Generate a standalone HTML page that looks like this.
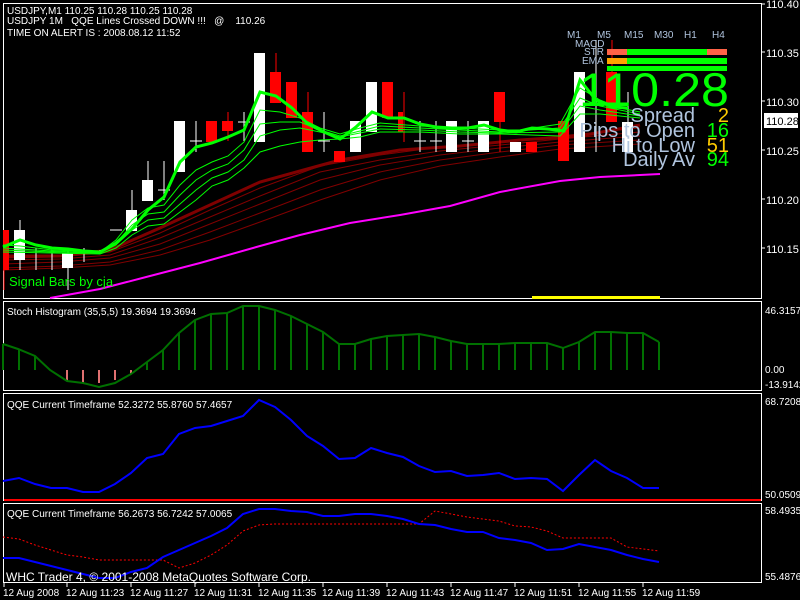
<!DOCTYPE html>
<html><head><meta charset="utf-8"><style>
html,body{margin:0;padding:0;background:#000;width:800px;height:600px;overflow:hidden}
svg{display:block}
text{font-family:"Liberation Sans",sans-serif}
</style></head><body>
<svg width="800" height="600" viewBox="0 0 800 600" xmlns="http://www.w3.org/2000/svg">
<rect width="800" height="600" fill="#000"/>
<!-- panel borders -->
<g fill="none" stroke="#fff" stroke-width="1">
<rect x="3.5" y="3.5" width="758" height="295"/>
<rect x="3.5" y="301.5" width="758" height="89"/>
<rect x="3.5" y="393.5" width="758" height="107"/>
<rect x="3.5" y="503.5" width="758" height="79"/>
</g>
<!-- price axis -->
<g fill="#fff" font-size="11">
<text x="766" y="8">110.40</text><line x1="761" y1="4" x2="765" y2="4" stroke="#fff"/>
<text x="766" y="57">110.35</text><line x1="761" y1="52" x2="765" y2="52" stroke="#fff"/>
<text x="766" y="106">110.30</text><line x1="761" y1="101" x2="765" y2="101" stroke="#fff"/>
<text x="766" y="155">110.25</text><line x1="761" y1="150" x2="765" y2="150" stroke="#fff"/>
<text x="766" y="204">110.20</text><line x1="761" y1="199" x2="765" y2="199" stroke="#fff"/>
<text x="766" y="253">110.15</text><line x1="761" y1="248" x2="765" y2="248" stroke="#fff"/>
</g>
<rect x="764" y="113" width="34" height="15" fill="#fff"/>
<text x="766" y="125" font-size="11" fill="#000">110.28</text>
<g fill="#fff" font-size="10">
<text x="765" y="314">46.3157</text>
<text x="765" y="373">0.00</text>
<text x="765" y="388">-13.9142</text>
<text x="765" y="405">68.7208</text>
<text x="765" y="498">50.0509</text>
<text x="765" y="514">58.4935</text>
<text x="765" y="580">55.4876</text>
</g>
<!-- headers -->
<g fill="#fff" font-size="10">
<text x="7" y="14">USDJPY,M1  110.25 110.28 110.25 110.28</text>
<text x="7" y="24" xml:space="preserve">USDJPY 1M   QQE Lines Crossed DOWN !!!   @    110.26</text>
<text x="7" y="36">TIME ON ALERT IS : 2008.08.12 11:52</text>
</g>
<!-- magenta -->
<polyline fill="none" stroke="#ff00ff" stroke-width="2" points="50,298 100,289 150,276 200,263 260,246 300,235 350,223 400,215 450,206 500,192 560,181 600,177 660,174"/>
<!-- dark red lines -->
<g fill="none" stroke="#800000" stroke-width="1">
<polyline points="3,268 60,266 110,262 160,250 210,232 260,213 320,190 380,172 440,160 500,152 560,145 640,140"/>
<polyline points="3,264 60,262 110,258 160,244 210,224 260,204 320,180 380,165 440,155 500,148 560,142 640,136"/>
<polyline points="3,260 60,259 110,255 160,238 210,217 260,196 320,172 380,160 440,151 500,145 560,139 640,132"/>
<polyline points="3,258 60,257 110,252 160,233 210,210 260,188 320,166 380,155 440,147 500,142 560,136 640,128"/>
<polyline points="3,270 60,268 110,265 160,255 210,240 260,222 320,200 380,180 440,166 500,157 560,149 640,144"/>
</g>
<polyline fill="none" stroke="#800000" stroke-width="3" points="3,256 60,256 110,250 160,228 210,205 260,182 300,171 340,160 400,150 460,146 520,140 580,136 640,125"/>
<!-- candles -->
<g stroke="#fff" stroke-width="1">
<line x1="20" y1="220" x2="20" y2="270"/><line x1="36" y1="248" x2="36" y2="270"/><line x1="52" y1="250" x2="52" y2="270"/><line x1="68" y1="248" x2="68" y2="290"/>
<line x1="84" y1="248" x2="84" y2="262"/><line x1="100" y1="250" x2="100" y2="254"/><line x1="116" y1="231" x2="116" y2="231"/>
<line x1="110" y1="230" x2="122" y2="230"/><line x1="132" y1="190" x2="132" y2="230"/><line x1="148" y1="161" x2="148" y2="201"/>
<line x1="164" y1="161" x2="164" y2="200"/><line x1="158" y1="190" x2="170" y2="190"/><line x1="196" y1="121" x2="196" y2="152"/><line x1="190" y1="141" x2="202" y2="141"/>
<line x1="244" y1="112" x2="244" y2="141"/><line x1="238" y1="122" x2="250" y2="122"/><line x1="324" y1="112" x2="324" y2="152"/><line x1="318" y1="141" x2="330" y2="141"/>
<line x1="420" y1="121" x2="420" y2="152"/><line x1="414" y1="141" x2="426" y2="141"/><line x1="436" y1="121" x2="436" y2="152"/><line x1="430" y1="141" x2="442" y2="141"/>
<line x1="468" y1="121" x2="468" y2="152"/><line x1="462" y1="141" x2="474" y2="141"/><line x1="532" y1="142" x2="532" y2="152"/>
<line x1="596" y1="40" x2="596" y2="152"/><line x1="628" y1="92" x2="628" y2="152"/>
</g>
<g stroke="#ff0000" stroke-width="1">
<line x1="4" y1="230" x2="4" y2="290"/><line x1="228" y1="112" x2="228" y2="141"/><line x1="276" y1="53" x2="276" y2="103"/><line x1="308" y1="92" x2="308" y2="152"/><line x1="404" y1="92" x2="404" y2="142"/><line x1="500" y1="92" x2="500" y2="152"/><line x1="612" y1="40" x2="612" y2="122"/>
</g>
<g fill="#fff">
<rect x="14" y="230" width="11" height="30"/><rect x="62" y="253" width="11" height="15"/><rect x="126" y="210" width="11" height="21"/><rect x="142" y="180" width="11" height="21"/>
<rect x="174" y="121" width="11" height="51"/><rect x="254" y="53" width="11" height="89"/><rect x="350" y="121" width="11" height="31"/><rect x="366" y="82" width="11" height="50"/>
<rect x="446" y="121" width="11" height="31"/><rect x="478" y="121" width="11" height="31"/><rect x="510" y="142" width="11" height="10"/><rect x="574" y="72" width="11" height="80"/><rect x="622" y="122" width="11" height="30"/>
<rect x="558" y="135" width="11" height="18"/>
</g>
<g fill="#ff0000">
<rect x="3" y="230" width="6" height="40"/><rect x="206" y="121" width="11" height="21"/><rect x="222" y="121" width="11" height="10"/><rect x="270" y="72" width="11" height="31"/>
<rect x="286" y="82" width="11" height="36"/><rect x="302" y="112" width="11" height="40"/><rect x="334" y="151" width="11" height="11"/><rect x="382" y="82" width="11" height="36"/>
<rect x="398" y="112" width="5" height="20"/><rect x="494" y="92" width="11" height="30"/><rect x="526" y="142" width="11" height="10"/><rect x="558" y="121" width="11" height="40"/><rect x="606" y="72" width="11" height="50"/>
</g>
<!-- green thin lines -->
<g fill="none" stroke="#00ff00" stroke-width="1">
<polyline points="3,245 20,246 52,250 100,252 116,240 132,220 148,208 164,205 180,185 196,170 212,162 228,156 244,142 260,110 280,112 300,118 320,128 340,134 360,128 380,123 420,126 460,128 500,130 520,130 560,124 580,88 600,100 620,108 640,112"/>
<polyline points="3,248 52,251 100,253 116,243 132,225 148,214 164,212 180,195 196,180 212,170 228,164 244,150 260,124 280,122 300,122 320,130 340,136 360,131 380,126 420,128 460,130 500,132 560,128 580,98 600,106 640,114"/>
<polyline points="3,250 52,252 100,253 116,245 132,230 148,220 164,218 180,204 196,190 212,178 228,172 244,160 260,136 280,130 300,128 320,132 340,137 360,133 380,129 420,130 460,132 500,133 560,132 580,106 600,110 640,116"/>
<polyline points="3,252 52,253 100,254 116,248 132,235 148,226 164,224 180,212 196,200 212,186 228,180 244,168 260,152 280,146 300,142 320,140 340,139 360,137 380,132 420,132 460,134 500,134 560,136 580,114 600,114 640,118"/>
</g>
<polyline fill="none" stroke="#00ff00" stroke-width="3" points="3,247 20,240 36,245 52,248 68,249 84,251 100,252 116,243 132,229 148,210 164,197 180,162 196,147 212,143 228,137 244,130 260,92 276,96 292,108 308,124 324,132 340,139 356,127 372,112 388,118 404,118 420,124 436,127 452,128 468,128 484,125 500,130 516,132 532,128 548,129 564,131 580,80 596,100 612,107 628,108"/>
<text x="9" y="286" font-size="13" fill="#00ff00">Signal Bars by cja</text>
<rect x="532" y="296" width="128" height="3" fill="#ffff00"/>
<!-- dashboard -->
<g fill="#b0c4de" font-size="10">
<text x="567" y="38">M1</text><text x="597" y="38">M5</text><text x="624" y="38">M15</text><text x="654" y="38">M30</text><text x="684" y="38">H1</text><text x="712" y="38">H4</text>
<text x="575" y="47">MACD</text><text x="584" y="55">STR</text><text x="582" y="64">EMA</text>
</g>
<rect x="607" y="49" width="20" height="6" fill="#ff6347"/><rect x="627" y="49" width="80" height="6" fill="#00ff00"/><rect x="707" y="49" width="20" height="6" fill="#ff6347"/>
<rect x="607" y="58" width="20" height="6" fill="#ffa500"/><rect x="627" y="58" width="100" height="6" fill="#00ff00"/>
<rect x="607" y="66" width="120" height="5" fill="#00ff00"/>
<text x="579" y="106" font-size="47" fill="#00ff00" textLength="150" lengthAdjust="spacingAndGlyphs">110.28</text>
<g fill="#b0c4de" font-size="20" text-anchor="end">
<text x="695" y="122">Spread</text><text x="695" y="137">Pips to Open</text><text x="695" y="152">Hi to Low</text><text x="695" y="166">Daily Av</text>
</g>
<g font-size="20" text-anchor="end">
<text x="729" y="122" fill="#ffcc00">2</text><text x="729" y="137" fill="#00ff00">16</text><text x="729" y="152" fill="#ffcc00">51</text><text x="729" y="166" fill="#00ff00">94</text>
</g>
<!-- stoch -->
<text x="7" y="315" font-size="10" fill="#fff">Stoch Histogram (35,5,5) 19.3694 19.3694</text>
<g stroke="#007000" stroke-width="2">
<line x1="3" y1="370" x2="3" y2="344"/><line x1="19" y1="370" x2="19" y2="349"/><line x1="35" y1="370" x2="35" y2="356"/><line x1="147" y1="370" x2="147" y2="362"/><line x1="163" y1="370" x2="163" y2="350"/><line x1="179" y1="370" x2="179" y2="333"/><line x1="195" y1="370" x2="195" y2="320"/><line x1="211" y1="370" x2="211" y2="314"/><line x1="227" y1="370" x2="227" y2="313"/><line x1="243" y1="370" x2="243" y2="306"/><line x1="259" y1="370" x2="259" y2="306"/><line x1="275" y1="370" x2="275" y2="310"/><line x1="291" y1="370" x2="291" y2="316"/><line x1="307" y1="370" x2="307" y2="324"/><line x1="323" y1="370" x2="323" y2="332"/><line x1="339" y1="370" x2="339" y2="344"/><line x1="355" y1="370" x2="355" y2="344"/><line x1="371" y1="370" x2="371" y2="339"/><line x1="387" y1="370" x2="387" y2="336"/><line x1="403" y1="370" x2="403" y2="335"/><line x1="419" y1="370" x2="419" y2="334"/><line x1="435" y1="370" x2="435" y2="337"/><line x1="451" y1="370" x2="451" y2="341"/><line x1="467" y1="370" x2="467" y2="344"/><line x1="483" y1="370" x2="483" y2="344"/><line x1="499" y1="370" x2="499" y2="344"/><line x1="515" y1="370" x2="515" y2="343"/><line x1="531" y1="370" x2="531" y2="343"/><line x1="547" y1="370" x2="547" y2="343"/><line x1="563" y1="370" x2="563" y2="348"/><line x1="579" y1="370" x2="579" y2="342"/><line x1="595" y1="370" x2="595" y2="332"/><line x1="611" y1="370" x2="611" y2="332"/><line x1="627" y1="370" x2="627" y2="333"/><line x1="643" y1="370" x2="643" y2="333"/><line x1="659" y1="370" x2="659" y2="342"/>
</g>
<g stroke="#e07070" stroke-width="2">
<line x1="67" y1="370" x2="67" y2="381"/><line x1="83" y1="370" x2="83" y2="383"/><line x1="99" y1="370" x2="99" y2="383"/><line x1="115" y1="370" x2="115" y2="380"/><line x1="131" y1="370" x2="131" y2="374"/>
</g>
<polyline fill="none" stroke="#007000" stroke-width="2" points="3,344 18,349 35,356 50,370 67,381 83,383 99,387 115,383 131,374 147,362 163,350 179,333 195,320 211,314 227,313 243,306 259,306 275,310 291,316 307,324 323,332 339,344 355,344 371,339 387,336 403,335 419,334 435,337 451,341 467,344 483,344 499,344 515,343 531,343 547,343 563,348 579,342 595,332 611,332 627,333 643,333 659,342"/>
<!-- QQE1 -->
<text x="7" y="408" font-size="10" fill="#fff">QQE Current Timeframe 52.3272 55.8760 57.4657</text>
<line x1="4" y1="500" x2="761" y2="500" stroke="#ff0000" stroke-width="2"/>
<polyline fill="none" stroke="#0000ff" stroke-width="2" points="3,481 19,478 35,484 51,488 67,488 83,492 99,492 115,484 131,473 147,458 163,454 179,434 195,428 211,426 227,421 243,416 259,400 275,407 291,420 307,436 323,446 339,459 355,458 371,448 387,453 403,457 419,466 435,472 451,471 467,476 483,475 499,473 515,479 531,478 547,479 563,491 579,475 595,460 611,471 627,478 643,488 659,488"/>
<!-- QQE2 -->
<text x="7" y="517" font-size="10" fill="#fff">QQE Current Timeframe 56.2673 56.7242 57.0065</text>
<polyline fill="none" stroke="#ff0000" stroke-width="1" stroke-dasharray="2,2" points="3,537 19,539 35,545 51,550 67,555 83,557 99,560 115,560 131,560 147,560 163,560 179,568 195,563 211,555 227,545 243,531 259,525 275,524 291,524 419,524 435,511 451,514 467,517 483,519 499,521 515,526 531,527 547,531 563,538 579,538 595,538 611,538 627,547 643,549 659,551"/>
<polyline fill="none" stroke="#0000ff" stroke-width="2" points="3,558 19,558 35,562 51,566 67,570 83,574 99,578 115,578 131,572 147,568 163,557 179,550 195,543 211,536 227,528 243,514 259,509 275,509 291,511 307,512 323,516 339,516 355,514 371,514 387,516 403,519 419,524 435,525 451,529 467,532 483,532 499,538 515,540 531,543 547,550 563,549 579,544 595,547 611,550 627,555 643,559 659,562"/>
<text x="6" y="581" font-size="12" fill="#fff">WHC Trader 4, © 2001-2008 MetaQuotes Software Corp.</text>
<!-- time axis -->
<g stroke="#fff"><line x1="4" y1="583" x2="4" y2="587"/><line x1="67" y1="583" x2="67" y2="587"/><line x1="131" y1="583" x2="131" y2="587"/><line x1="195" y1="583" x2="195" y2="587"/><line x1="259" y1="583" x2="259" y2="587"/><line x1="323" y1="583" x2="323" y2="587"/><line x1="387" y1="583" x2="387" y2="587"/><line x1="451" y1="583" x2="451" y2="587"/><line x1="515" y1="583" x2="515" y2="587"/><line x1="579" y1="583" x2="579" y2="587"/><line x1="643" y1="583" x2="643" y2="587"/></g>
<g fill="#fff" font-size="10">
<text x="3" y="596">12 Aug 2008</text><text x="66" y="596">12 Aug 11:23</text><text x="130" y="596">12 Aug 11:27</text><text x="194" y="596">12 Aug 11:31</text><text x="258" y="596">12 Aug 11:35</text><text x="322" y="596">12 Aug 11:39</text><text x="386" y="596">12 Aug 11:43</text><text x="450" y="596">12 Aug 11:47</text><text x="514" y="596">12 Aug 11:51</text><text x="578" y="596">12 Aug 11:55</text><text x="642" y="596">12 Aug 11:59</text>
</g>
</svg>
</body></html>
